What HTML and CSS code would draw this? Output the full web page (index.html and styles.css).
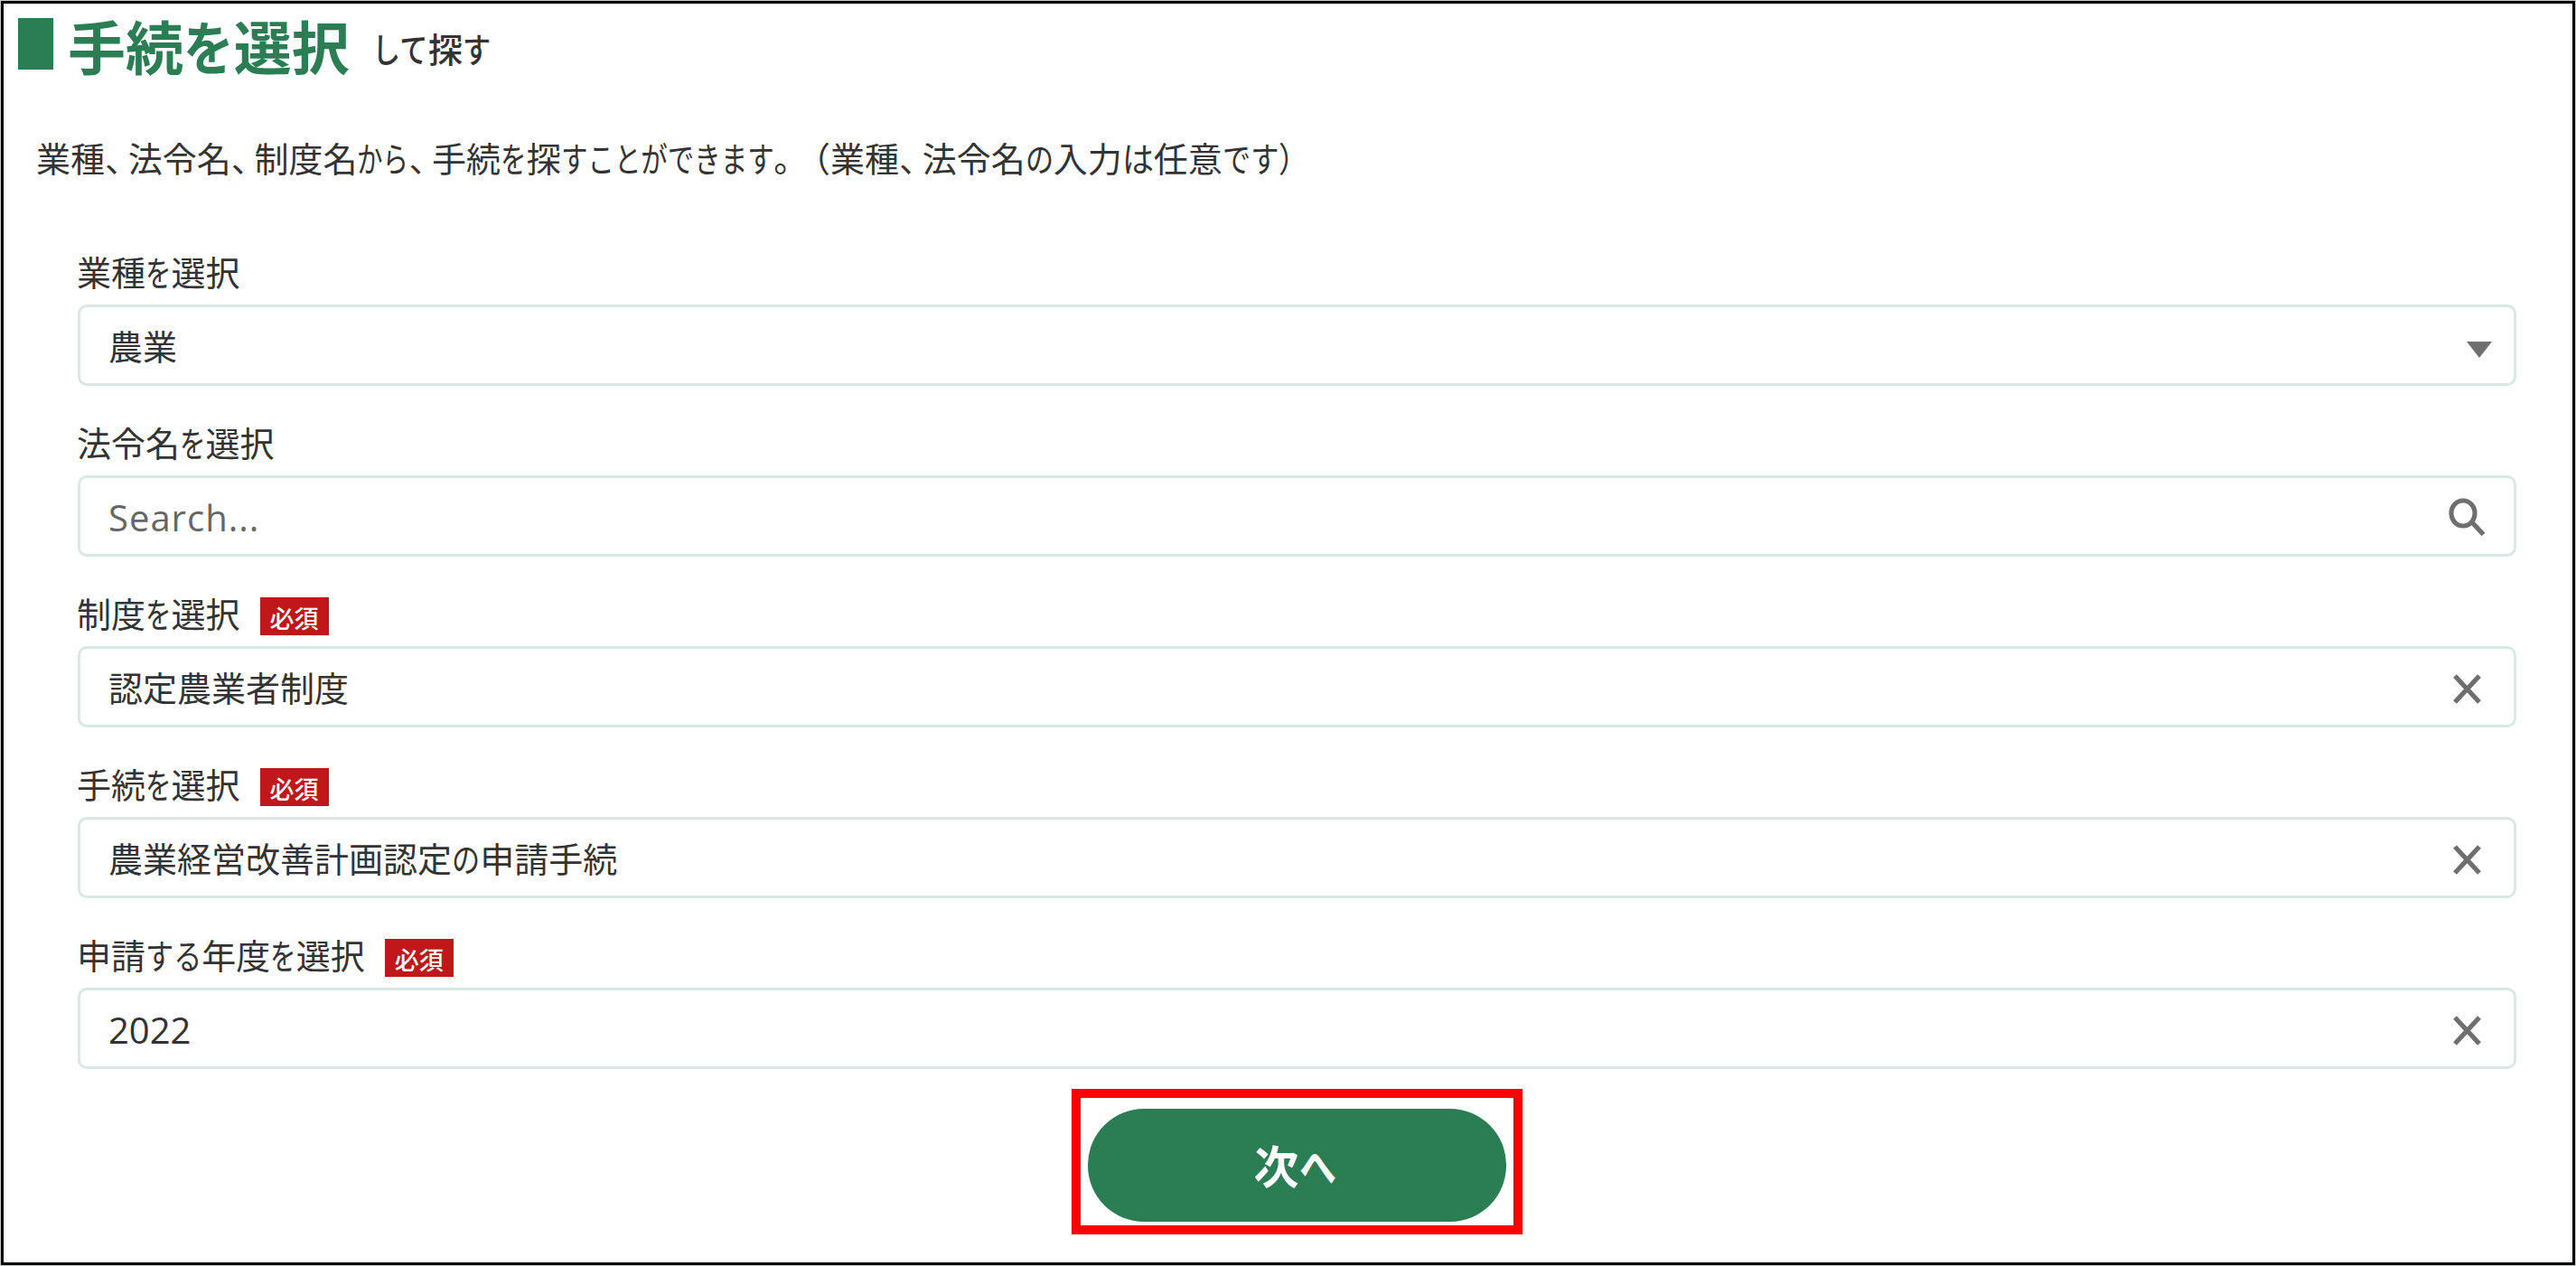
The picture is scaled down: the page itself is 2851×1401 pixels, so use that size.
FILE: index.html
```html
<!DOCTYPE html>
<html lang="ja">
<head>
<meta charset="utf-8">
<title>手続を選択して探す</title>
<link rel="stylesheet" href="styles.css">
</head>
<body>
<main class="frame">
  <h1 class="heading"><span class="heading-bar"></span><span class="heading-main">手続<span class="kana wide n1">を</span>選択</span><span class="heading-sub"><span class="kana n2">して</span>探<span class="kana n1">す</span></span></h1>
  <p class="lead">業種<span class="comma">、</span>法令名<span class="comma">、</span>制度名<span class="kana tight n2">から</span><span class="comma">、</span>手続<span class="kana tight n1">を</span>探<span class="kana mid n8">すことができます</span><span class="comma">。</span><span class="paren">（</span>業種<span class="comma">、</span>法令名<span class="kana n1">の</span>入力<span class="kana wider n1">は</span>任意<span class="kana n2">です</span><span class="kana wide n1">）</span></p>
  <form class="form">
    <div class="field">
      <div class="label"><span class="label-text">業種<span class="kana tight n1">を</span>選択</span></div>
      <div class="control">
        <span class="value">農業</span>
        <svg class="icon" viewBox="0 0 48 48"><path class="solid" d="M14 20h28L28 38z"/></svg>
      </div>
    </div>
    <div class="field">
      <div class="label"><span class="label-text">法令名<span class="kana tight n1">を</span>選択</span></div>
      <div class="control">
        <span class="value latin placeholder">Search...</span>
        <svg class="icon" viewBox="0 0 48 48"><ellipse class="line" cx="10" cy="21" rx="13" ry="14"/><path class="line" d="M20 31L32.500 44.500"/></svg>
      </div>
    </div>
    <div class="field">
      <div class="label"><span class="label-text">制度<span class="kana tight n1">を</span>選択</span><span class="badge">必須</span></div>
      <div class="control">
        <span class="value">認定農業者制度</span>
        <svg class="icon" viewBox="0 0 48 48"><path class="line" d="M1 12L28 41M28 12L1 41"/></svg>
      </div>
    </div>
    <div class="field">
      <div class="label"><span class="label-text">手続<span class="kana tight n1">を</span>選択</span><span class="badge">必須</span></div>
      <div class="control">
        <span class="value">農業経営改善計画認定<span class="kana n1">の</span>申請手続</span>
        <svg class="icon" viewBox="0 0 48 48"><path class="line" d="M1 12L28 41M28 12L1 41"/></svg>
      </div>
    </div>
    <div class="field">
      <div class="label"><span class="label-text">申請<span class="kana n2">する</span>年度<span class="kana tight n1">を</span>選択</span><span class="badge">必須</span></div>
      <div class="control">
        <span class="value latin">2022</span>
        <svg class="icon" viewBox="0 0 48 48"><path class="line" d="M1 12L28 41M28 12L1 41"/></svg>
      </div>
    </div>
    <div class="highlight"><button class="next" type="button">次<span class="kana n1">へ</span></button></div>
  </form>
</main>
</body>
</html>
```
FILE: styles.css
```css
* { box-sizing: border-box; }

body {
  margin: 0;
  padding: 1px;
  background: #c8cbc9;
  color: #333;
  font: 38px/44px "Noto Sans CJK JP", sans-serif;
  text-spacing-trim: space-all;
}

.frame {
  height: 1399px;
  border: 3px solid #000;
  background: #fff;
  overflow: hidden;
}

/* Kana are set narrower than kanji: --s is the width ratio, --n the number of letters */
.kana {
  --s: 0.82;
  display: inline-block;
  width: calc(var(--n) * var(--s) * 1em);
  white-space: nowrap;
  transform: scaleX(var(--s));
  transform-origin: 0 50%;
}
.wider { --s: 0.92; }
.wide { --s: 0.87; }
.mid { --s: 0.775; }
.tight { --s: 0.75; }
.n1 { --n: 1; }
.n2 { --n: 2; }
.n8 { --n: 8; }

.comma {
  display: inline-block;
  width: 25.700px;
  font-feature-settings: "halt";
}
.paren {
  display: inline-block;
  width: 37px;
  font-feature-settings: "halt";
  text-align: right;
}

.heading {
  display: flex;
  height: 92px;
  margin: 0;
  padding: 16px 0 0 16px;
  font-weight: 700;
}
.heading-bar {
  width: 39px;
  height: 57px;
  background: #2b7e54;
}
.heading-main {
  margin-left: 16px;
  color: #2b7e54;
  font-size: 64px;
  line-height: 58px;
}
.heading-sub {
  margin-left: 25px;
  font-size: 38px;
  font-weight: 500;
  line-height: 66px;
}

.lead {
  margin: 53px 0 0 36px;
  height: 50px;
  line-height: 50px;
  white-space: nowrap;
}

.form {
  display: flex;
  flex-direction: column;
  gap: 45px;
  margin: 84px 62px 0 82px;
}
.label {
  display: flex;
  height: 42px;
  margin-bottom: 12px;
}
.label-text {
  margin-left: -1px;
  line-height: 34px;
}
.badge {
  width: 76px;
  height: 42px;
  margin-left: 22px;
  background: #c0171a;
  color: #fff;
  font-size: 27px;
  font-weight: 500;
  line-height: 45px;
  text-align: center;
}
.control {
  display: flex;
  justify-content: space-between;
  align-items: center;
  height: 90px;
  padding: 0 18px 0 31px;
  border: 3px solid #d8e8e2;
  border-radius: 10px;
}
.latin {
  padding-top: 3px;
  font-family: "Open Sans", "Noto Sans", sans-serif;
  font-size: 40px;
}
.placeholder {
  color: #666;
  letter-spacing: 1px;
}
.icon {
  width: 48px;
  height: 48px;
  overflow: visible;
}
.solid { fill: #706f6f; }
.line {
  fill: none;
  stroke: #706f6f;
  stroke-width: 5.200;
}

.highlight {
  align-self: center;
  width: 499px;
  height: 161px;
  margin-top: -23px;
  padding: 12px 8px 0;
  border: 10px solid #f00;
}
.next {
  display: block;
  width: 100%;
  height: 125px;
  margin: 0;
  padding: 0 5px 4px 0;
  border: 0;
  border-radius: 62px;
  background: #2b7e54;
  color: #fff;
  font: 700 50px/60px "Noto Sans CJK JP", sans-serif;
}
```
